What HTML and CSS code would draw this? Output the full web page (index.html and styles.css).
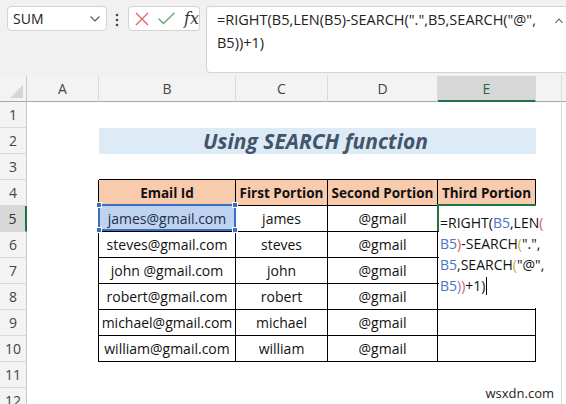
FILE: index.html
```html
<!DOCTYPE html>
<html>
<head>
<meta charset="utf-8">
<link rel="stylesheet" href="styles.css">
</head>
<body>
<div class="app">
  <div class="topbar">
    <div class="namebox">
      <span class="name">SUM</span>
      <svg class="chev" width="10" height="6" viewBox="0 0 10 6"><path d="M0.5 0.5 L5 5 L9.5 0.5" fill="none" stroke="#555" stroke-width="1.1"/></svg>
    </div>
    <svg class="dots" width="4" height="14" viewBox="0 0 4 14"><circle cx="2" cy="2" r="1.3" fill="#444"/><circle cx="2" cy="7" r="1.3" fill="#444"/><circle cx="2" cy="12" r="1.3" fill="#444"/></svg>
    <div class="fxbox">
      <svg width="14" height="14" viewBox="0 0 14 14"><path d="M1 1 L13 13 M13 1 L1 13" stroke="#E0676B" stroke-width="1.4" fill="none"/></svg>
      <svg width="17" height="13" viewBox="0 0 17 13"><path d="M0.5 6.5 L5.5 11.5 L16.5 0.8" stroke="#62A87A" stroke-width="1.4" fill="none"/></svg>
      <span class="fx">fx</span>
    </div>
    <div class="formula">
      <div class="ftext">=RIGHT(B5,LEN(B5)-SEARCH(".",B5,SEARCH("@",<br>B5))+1)</div>
      <svg class="collapse" width="8" height="6" viewBox="0 0 8 6"><path d="M0.5 5 L4 1 L7.5 5" fill="none" stroke="#555" stroke-width="1.1"/></svg>
    </div>
  </div>

  <div class="sheet">
    <div class="corner"><svg width="13" height="13" viewBox="0 0 13 13"><path d="M13 0 L13 13 L0 13 Z" fill="#D6D6D6"/></svg></div>
    <div class="ch">A</div><div class="ch">B</div><div class="ch">C</div><div class="ch">D</div><div class="ch sel">E</div><div class="ch"></div><div class="ch last"></div>

    <div class="rh">1</div><div class="c"></div><div class="c"></div><div class="c"></div><div class="c"></div><div class="c"></div><div class="c edge"></div><div class="c"></div>

    <div class="rh">2</div><div class="c"></div><div class="title">Using SEARCH function</div><div class="c edge"></div><div class="c"></div>

    <div class="rh">3</div><div class="c"></div><div class="c tb"></div><div class="c tb"></div><div class="c tb"></div><div class="c tb"></div><div class="c edge"></div><div class="c"></div>

    <div class="rh">4</div><div class="c lb"></div><div class="t th">Email Id</div><div class="t th">First Portion</div><div class="t th">Second Portion</div><div class="t th">Third Portion</div><div class="c edge"></div><div class="c"></div>

    <div class="rh sel">5</div><div class="c lb"></div><div class="t picked">james@gmail.com</div><div class="t">james</div><div class="t">@gmail</div><div class="t"></div><div class="c edge"></div><div class="c"></div>

    <div class="rh">6</div><div class="c lb"></div><div class="t">steves@gmail.com</div><div class="t">steves</div><div class="t">@gmail</div><div class="t"></div><div class="c edge"></div><div class="c"></div>

    <div class="rh">7</div><div class="c lb"></div><div class="t">john @gmail.com</div><div class="t">john</div><div class="t">@gmail</div><div class="t"></div><div class="c edge"></div><div class="c"></div>

    <div class="rh">8</div><div class="c lb"></div><div class="t">robert@gmail.com</div><div class="t">robert</div><div class="t">@gmail</div><div class="t"></div><div class="c edge"></div><div class="c"></div>

    <div class="rh">9</div><div class="c lb"></div><div class="t">michael@gmail.com</div><div class="t">michael</div><div class="t">@gmail</div><div class="t"></div><div class="c edge"></div><div class="c"></div>

    <div class="rh">10</div><div class="c lb"></div><div class="t">william@gmail.com</div><div class="t">william</div><div class="t">@gmail</div><div class="t"></div><div class="c edge"></div><div class="c"></div>

    <div class="rh">11</div><div class="c"></div><div class="c"></div><div class="c"></div><div class="c"></div><div class="c"></div><div class="c edge"></div><div class="c"></div>

    <div class="rh">12</div><div class="c"></div><div class="c"></div><div class="c"></div><div class="c"></div><div class="c"></div><div class="c edge"></div><div class="c"></div>

    <div class="selection">
      <span class="handle h-tl"></span><span class="handle h-tr"></span><span class="handle h-bl"></span><span class="handle h-br"></span>
    </div>
    <div class="active"></div>
    <div class="editor">=RIGHT(<span class="ref">B5</span>,LEN<span class="p1">(</span><br><span class="ref">B5</span><span class="p1">)</span>-SEARCH<span class="p2">(</span>".",<br><span class="ref">B5</span>,SEARCH<span class="p2">(</span>"@",<br><span class="ref">B5</span><span class="p3">)</span><span class="p4">)</span>+1)<span class="caret"></span></div>
    <div class="watermark">wsxdn.com</div>
  </div>
</div>
</body>
</html>
```

FILE: styles.css
```css
* { box-sizing: border-box; }
html, body { margin: 0; padding: 0; }
body {
  width: 566px;
  height: 404px;
  overflow: hidden;
  background: #ffffff;
  font-family: "Open Sans", "Noto Sans", sans-serif;
  color: #222;
}
.app { width: 566px; height: 404px; overflow: hidden; }

.topbar {
  height: 76px;
  background: #F1F1F1;
  display: flex;
  align-items: flex-start;
  padding: 6px 0 0 7px;
}
.namebox {
  width: 100px;
  height: 25px;
  background: #fff;
  border: 1px solid #D3D3D3;
  border-radius: 4px;
  display: flex;
  align-items: center;
  justify-content: space-between;
  padding: 0 6px 0 5px;
}
.name { font-size: 14px; color: #222; }
.dots { margin: 7px 0 0 8px; }
.fxbox {
  width: 72px;
  height: 25px;
  margin-left: 9px;
  background: #fff;
  border: 1px solid #D3D3D3;
  border-radius: 4px;
  display: flex;
  align-items: center;
  gap: 9px;
  padding: 0 0 0 6px;
}
.fx {
  font-family: "DejaVu Serif", "Liberation Serif", serif;
  font-style: italic;
  font-size: 16px;
  color: #333;
}
.formula {
  flex: 1;
  height: 67px;
  margin-left: 6px;
  margin-right: -6px;
  background: #fff;
  border: 1px solid #D3D3D3;
  border-radius: 4px;
  padding: 1px 8px 0 10px;
  display: flex;
  justify-content: space-between;
  align-items: flex-start;
}
.ftext { font-size: 14.5px; line-height: 23px; color: #222; }
.collapse { margin-top: 10px; }

.sheet {
  position: relative;
  display: grid;
  grid-template-columns: 27px 72px 137px 92px 110px 98px 26px 1fr;
  grid-auto-rows: 26px;
  font-family: "Open Sans", "Noto Sans", sans-serif;
}
.corner {
  background: #F3F3F3;
  border-right: 1px solid #C9C9C9;
  border-bottom: 1px solid #A8A8A8;
  display: flex;
  align-items: flex-end;
  justify-content: flex-end;
  padding: 0 3px 3px 0;
}
.ch {
  background: #F3F3F3;
  border-right: 1px solid #DADADA;
  border-bottom: 1px solid #A8A8A8;
  font-size: 14px;
  color: #444;
  display: flex;
  align-items: center;
  justify-content: center;
}
.ch.sel {
  background: #D7D7D7;
  color: #1E6B41;
  border-bottom: 2px solid #217346;
}
.ch.last { border-right: none; }
.rh {
  background: #F3F3F3;
  border-right: 1px solid #C9C9C9;
  border-bottom: 1px solid #DADADA;
  font-size: 14px;
  color: #444;
  display: flex;
  align-items: center;
  justify-content: center;
}
.rh.sel {
  background: #D7D7D7;
  border-right: 2px solid #217346;
  color: #333;
}
.c { background: #fff; }
.c.edge { border-right: 1px solid #D9D9D9; }
.c.tb { border-bottom: 1px solid #000; }
.c.lb { border-right: 1px solid #000; }

.title {
  grid-column: span 4;
  background: #DDEBF7;
  color: #44546A;
  font-weight: 700;
  font-style: italic;
  font-size: 21px;
  display: flex;
  align-items: center;
  justify-content: center;
  padding-right: 4px;
}
.t {
  border-right: 1px solid #000;
  border-bottom: 1px solid #000;
  font-size: 14px;
  color: #111;
  display: flex;
  align-items: center;
  justify-content: center;
  white-space: nowrap;
  overflow: hidden;
}
.t.th {
  background: #F8CBAD;
  font-weight: 700;
  font-size: 13.5px;
}
.t.picked {
  background: #BDD3F0;
  color: #1F2F4A;
}

.selection {
  position: absolute;
  left: 98px;
  top: 128px;
  width: 138px;
  height: 27px;
  border: 2px solid #3C6EC0;
}
.handle {
  position: absolute;
  width: 6px;
  height: 6px;
  background: #3C6EC0;
  border: 1px solid #fff;
}
.h-tl { left: -4px; top: -4px; }
.h-tr { right: -4px; top: -4px; }
.h-bl { left: -4px; bottom: -4px; }
.h-br { right: -4px; bottom: -4px; }

.active {
  position: absolute;
  left: 437px;
  top: 128px;
  width: 99px;
  height: 27px;
  border-top: 2px solid #217346;
  border-left: 2px solid #217346;
}
.editor {
  position: absolute;
  left: 439px;
  top: 130px;
  width: 112px;
  height: 102px;
  background: #fff;
  padding: 6px 0 0 1px;
  font-size: 14px;
  line-height: 21px;
  color: #111;
  white-space: nowrap;
}
.ref { color: #4A74C9; }
.p1 { color: #E0555E; }
.p2 { color: #C9A93C; }
.p3 { color: #9B6BC4; }
.p4 { color: #E0557E; }
.caret {
  display: inline-block;
  width: 1px;
  height: 18px;
  background: #000;
  vertical-align: -4px;
  margin-left: 1px;
}
.watermark {
  position: absolute;
  right: 12px;
  top: 310px;
  font-size: 13px;
  line-height: 14px;
  color: #222;
}
```
